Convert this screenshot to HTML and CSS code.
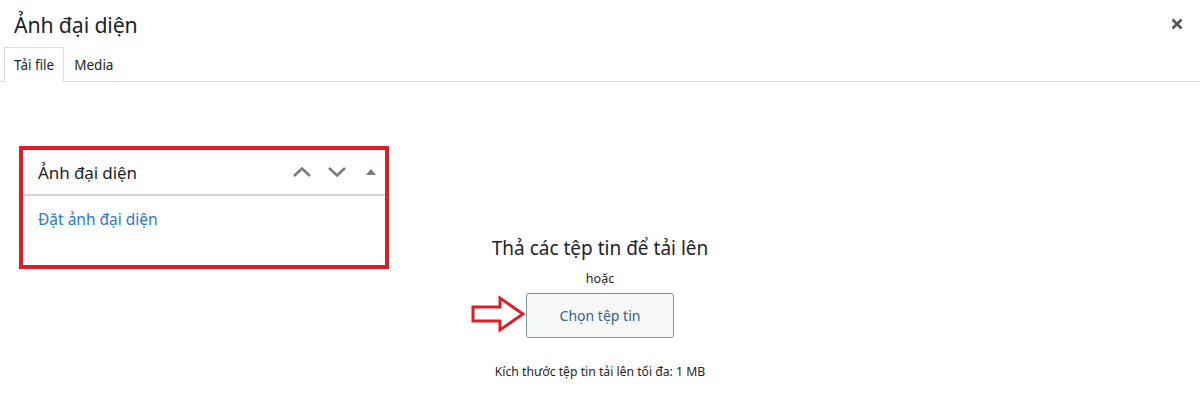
FILE: index.html
```html
<!DOCTYPE html>
<html lang="vi">
<head>
<meta charset="utf-8">
<link rel="stylesheet" href="styles.css">
</head>
<body>
<div class="modal">
  <div class="modal-header">
    <h1 class="modal-title">Ảnh đại diện</h1>
    <button class="close-btn" aria-label="Đóng">
      <svg width="12" height="12" viewBox="0 0 12 12"><path d="M1.5 1.5 L10.5 10.5 M10.5 1.5 L1.5 10.5" stroke="#50575e" stroke-width="2.6" stroke-linecap="butt"/></svg>
    </button>
  </div>
  <div class="tabs">
    <span class="tab active">Tải file</span>
    <span class="tab">Media</span>
  </div>
  <div class="content">
    <div class="widget">
      <div class="widget-head">
        <span class="widget-title">Ảnh đại diện</span>
        <span class="widget-ctrls">
          <svg class="chev" width="20" height="12" viewBox="0 0 20 12"><path d="M2 10 L10 2.5 L18 10" fill="none" stroke="#787c82" stroke-width="2.6"/></svg>
          <svg class="chev" width="20" height="12" viewBox="0 0 20 12"><path d="M2 2 L10 9.5 L18 2" fill="none" stroke="#787c82" stroke-width="2.6"/></svg>
          <svg class="tri" width="10" height="8" viewBox="0 0 10 8"><path d="M0 7 L5 1 L10 7 Z" fill="#787c82"/></svg>
        </span>
      </div>
      <div class="widget-body">
        <a class="widget-link" href="#">Đặt ảnh đại diện</a>
      </div>
    </div>
    <div class="uploader">
      <h2 class="drop-title">Thả các tệp tin để tải lên</h2>
      <p class="or">hoặc</p>
      <div class="btn-wrap">
        <svg class="arrow" width="56" height="38" viewBox="0 0 56 38"><path d="M3 12 L30 12 L30 3 L53 19 L30 35 L30 26 L3 26 Z" fill="none" stroke="#d9202a" stroke-width="3" stroke-linejoin="miter"/></svg>
        <button class="select-btn">Chọn tệp tin</button>
      </div>
      <p class="max-size">Kích thước tệp tin tải lên tối đa: 1 MB</p>
    </div>
  </div>
</div>
</body>
</html>
```

FILE: styles.css
```css
* { box-sizing: border-box; }
html, body { margin: 0; padding: 0; background: #fff; }
body {
  font-family: "Noto Sans", "Open Sans", sans-serif;
  color: #1d2327;
  width: 1200px;
  height: 411px;
  overflow: hidden;
}
.modal { display: flex; flex-direction: column; }
.modal-header {
  display: flex;
  align-items: center;
  justify-content: space-between;
  height: 47px;
  padding: 0 17px 0 14px;
}
.modal-title {
  margin: 0;
  padding-top: 3px;
  font-size: 21.3px;
  font-weight: 400;
  line-height: 44px;
  letter-spacing: -0.15px;
}
.close-btn {
  border: 0;
  background: none;
  padding: 0;
  width: 12px;
  height: 12px;
  display: flex;
}
.tabs {
  display: flex;
  height: 35px;
  padding-left: 4px;
  border-bottom: 1px solid #dcdcde;
}
.tab {
  font-size: 13.5px;
  line-height: 35px;
  padding: 0 9px;
  color: #1d2327;
  border: 1px solid transparent;
  border-bottom: 0;
}
.tab.active {
  border-color: #dcdcde;
  background: #fff;
  height: 35px;
  margin-bottom: -1px;
}
.content {
  display: grid;
}
.widget {
  grid-area: 1 / 1;
  justify-self: start;
  align-self: start;
  margin: 64px 0 0 19px;
  width: 370px;
  height: 123px;
  border: 4px solid #e01c2b;
  background: #fff;
}
.widget-head {
  display: flex;
  align-items: center;
  justify-content: space-between;
  height: 46px;
  padding: 0 9px 0 15px;
  border-bottom: 2px solid #d6d6d6;
}
.widget-title {
  font-size: 17px;
  color: #1d2327;
  letter-spacing: -0.1px;
}
.widget-ctrls {
  display: flex;
  align-items: center;
  gap: 15px;
}
.tri { margin-left: 4px; }
.widget-body { padding: 12px 15px; }
.widget-link {
  font-size: 15.5px;
  color: #2a78d4;
  text-decoration: none;
}
.uploader {
  grid-area: 1 / 1;
  justify-self: center;
  display: flex;
  flex-direction: column;
  align-items: center;
  padding-top: 152px;
}
.drop-title {
  margin: 0;
  font-size: 19px;
  font-weight: 400;
  line-height: 28px;
  color: #1d2327;
}
.or {
  margin: 8px 0 0;
  font-size: 12.5px;
  line-height: 18px;
}
.btn-wrap {
  position: relative;
  margin-top: 5px;
}
.arrow {
  position: absolute;
  right: 100%;
  top: 2px;
  margin-right: 0;
}
.select-btn {
  width: 148px;
  height: 45px;
  border: 1px solid #7d96b0;
  border-radius: 3px;
  background: #f6f7f7;
  color: #34628f;
  font-family: inherit;
  font-size: 14px;
}
.max-size {
  margin: 25px 0 0;
  font-size: 12.2px;
  line-height: 18px;
}
```
